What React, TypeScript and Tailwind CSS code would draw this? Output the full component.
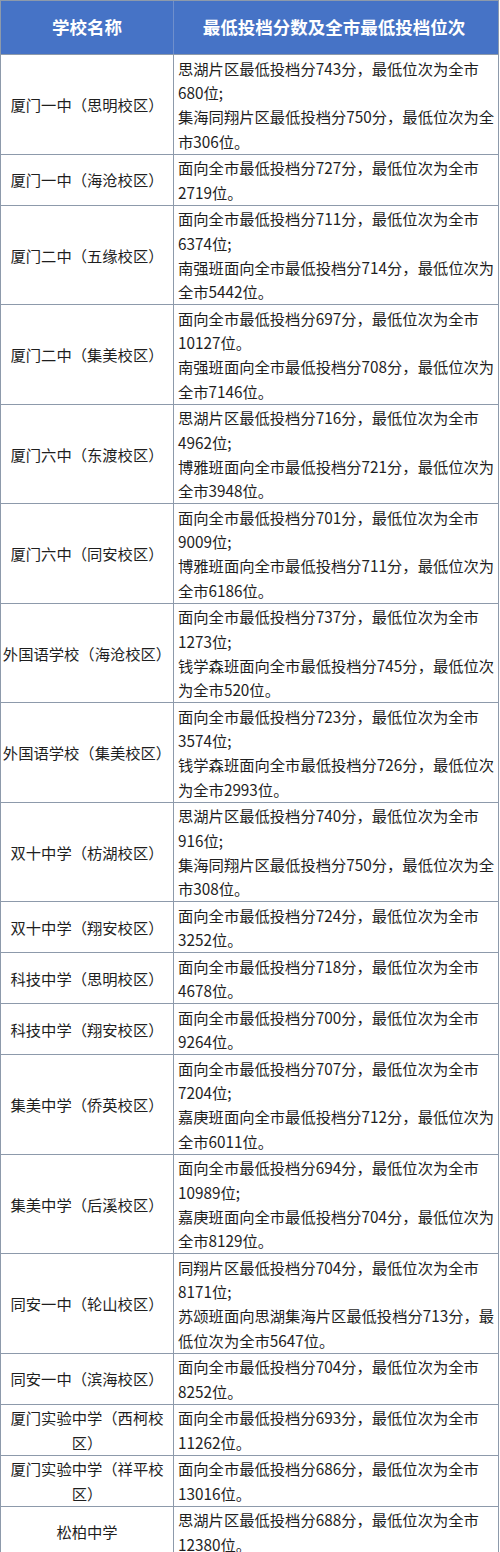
const rows: { name: string[]; lines: string[] }[] = [
  { name: ['厦门一中（思明校区）'], lines: ['思湖片区最低投档分743分，最低位次为全市', '680位;', '集海同翔片区最低投档分750分，最低位次为全', '市306位。'] },
  { name: ['厦门一中（海沧校区）'], lines: ['面向全市最低投档分727分，最低位次为全市', '2719位。'] },
  { name: ['厦门二中（五缘校区）'], lines: ['面向全市最低投档分711分，最低位次为全市', '6374位;', '南强班面向全市最低投档分714分，最低位次为', '全市5442位。'] },
  { name: ['厦门二中（集美校区）'], lines: ['面向全市最低投档分697分，最低位次为全市', '10127位。', '南强班面向全市最低投档分708分，最低位次为', '全市7146位。'] },
  { name: ['厦门六中（东渡校区）'], lines: ['思湖片区最低投档分716分，最低位次为全市', '4962位;', '博雅班面向全市最低投档分721分，最低位次为', '全市3948位。'] },
  { name: ['厦门六中（同安校区）'], lines: ['面向全市最低投档分701分，最低位次为全市', '9009位;', '博雅班面向全市最低投档分711分，最低位次为', '全市6186位。'] },
  { name: ['外国语学校（海沧校区）'], lines: ['面向全市最低投档分737分，最低位次为全市', '1273位;', '钱学森班面向全市最低投档分745分，最低位次', '为全市520位。'] },
  { name: ['外国语学校（集美校区）'], lines: ['面向全市最低投档分723分，最低位次为全市', '3574位;', '钱学森班面向全市最低投档分726分，最低位次', '为全市2993位。'] },
  { name: ['双十中学（枋湖校区）'], lines: ['思湖片区最低投档分740分，最低位次为全市', '916位;', '集海同翔片区最低投档分750分，最低位次为全', '市308位。'] },
  { name: ['双十中学（翔安校区）'], lines: ['面向全市最低投档分724分，最低位次为全市', '3252位。'] },
  { name: ['科技中学（思明校区）'], lines: ['面向全市最低投档分718分，最低位次为全市', '4678位。'] },
  { name: ['科技中学（翔安校区）'], lines: ['面向全市最低投档分700分，最低位次为全市', '9264位。'] },
  { name: ['集美中学（侨英校区）'], lines: ['面向全市最低投档分707分，最低位次为全市', '7204位;', '嘉庚班面向全市最低投档分712分，最低位次为', '全市6011位。'] },
  { name: ['集美中学（后溪校区）'], lines: ['面向全市最低投档分694分，最低位次为全市', '10989位;', '嘉庚班面向全市最低投档分704分，最低位次为', '全市8129位。'] },
  { name: ['同安一中（轮山校区）'], lines: ['同翔片区最低投档分704分，最低位次为全市', '8171位;', '苏颂班面向思湖集海片区最低投档分713分，最', '低位次为全市5647位。'] },
  { name: ['同安一中（滨海校区）'], lines: ['面向全市最低投档分704分，最低位次为全市', '8252位。'] },
  { name: ['厦门实验中学（西柯校', '区）'], lines: ['面向全市最低投档分693分，最低位次为全市', '11262位。'] },
  { name: ['厦门实验中学（祥平校', '区）'], lines: ['面向全市最低投档分686分，最低位次为全市', '13016位。'] },
  { name: ['松柏中学'], lines: ['思湖片区最低投档分688分，最低位次为全市', '12380位。'] },
];

export default function App() {
  return (
    <div className="h-[1552px] w-[500px] overflow-hidden bg-white font-['Noto_Sans_CJK_SC','Noto_Sans',sans-serif]">
      <div className="w-[499px] border-l border-r border-t border-[#8d9aab]">
        <div className="grid h-[54px] grid-cols-[173px_1fr] border-b border-[#8d9aab] bg-[#4673c6] text-[17.5px] font-bold text-white">
          <div className="flex items-center justify-center border-r border-[#6f8fcc]">学校名称</div>
          <div className="flex items-center justify-center pr-[4px]">最低投档分数及全市最低投档位次</div>
        </div>
        {rows.map((r, i) => (
          <div key={i} className="grid grid-cols-[173px_1fr] border-b border-[#8d9aab] text-[15.3px] leading-[24.25px] text-[#1e1e1e]">
            <div className="flex flex-col items-center justify-center border-r border-[#8d9aab] text-center">
              {r.name.map((n, j) => (
                <span key={j} className="whitespace-nowrap">{n}</span>
              ))}
            </div>
            <div className="py-[0.75px] pl-[4px]">
              {r.lines.map((l, j) => (
                <div key={j} className="whitespace-nowrap">{l}</div>
              ))}
            </div>
          </div>
        ))}
      </div>
    </div>
  );
}
